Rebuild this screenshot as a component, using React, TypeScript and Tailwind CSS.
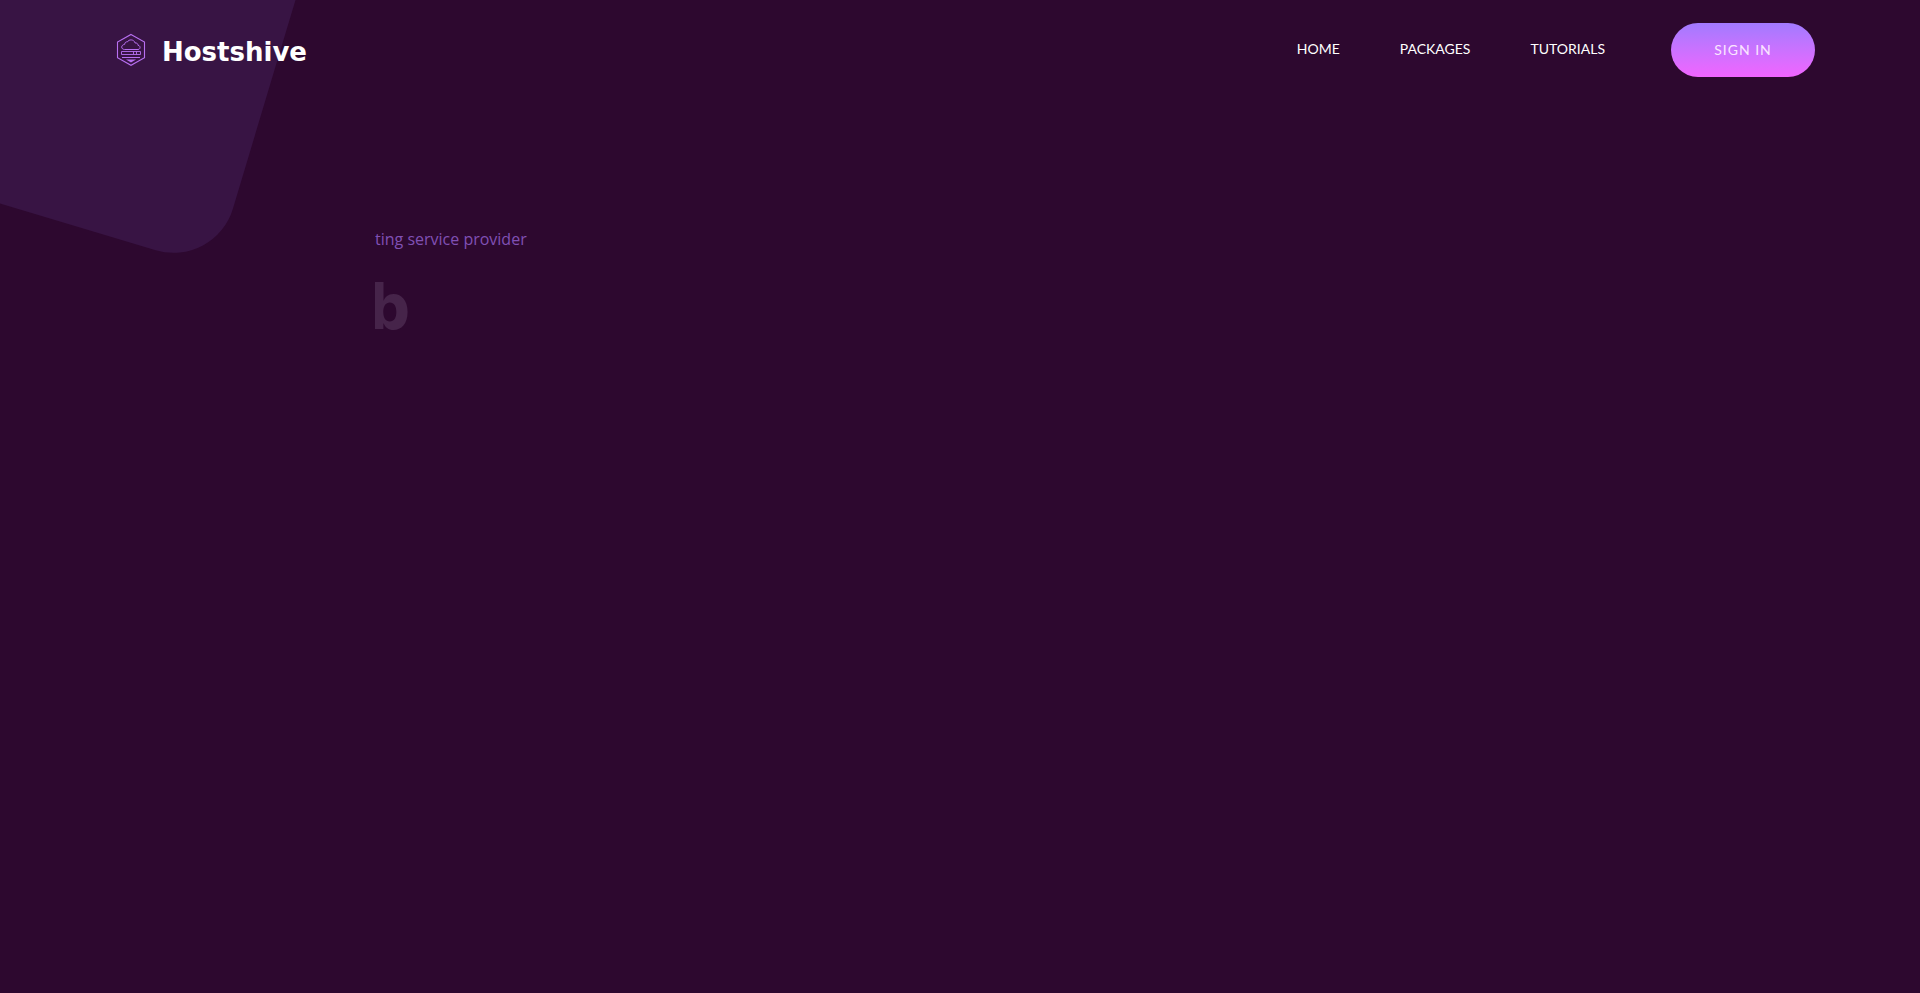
const links = ['HOME', 'PACKAGES', 'TUTORIALS'];

function HiveLogo() {
  return (
    <svg width="30" height="34" viewBox="0 0 30 34" fill="none" stroke="#b870f2" aria-hidden="true">
      <path d="M15 1.5 28.5 9v15.800L15 32.300 1.500 24.800V9Z" strokeWidth="1.1" />
      <path d="M8.500 16.500C4.700 16.300 4.800 11.900 8.700 11.300C8.700 9.300 10.200 8.700 11.500 8.800C12.700 6.200 18 6 19 9.900C21.200 9.900 22 10.900 21.900 12.200C25 12.800 24.500 16.500 22 16.500Z" strokeWidth="1" />
      <path d="M5.500 18.500H24.500V21.500H5.500ZM17.500 18.500V21.500M20.500 18.500V21.500" strokeWidth="0.9" />
      <path d="M6 24.500H24" strokeWidth="1" />
      <path d="M10 26.500H20L15 29.400Z" fill="#b870f2" stroke="none" />
    </svg>
  );
}

export default function App() {
  return (
    <div className="relative min-h-screen overflow-hidden bg-[#2d082f] font-['Open_Sans',sans-serif]">
      <div className="absolute -top-[181px] -left-[119px] size-[400px] rotate-[16.7deg] rounded-[62px] bg-[#381444]" />
      <header className="relative flex items-center justify-between pt-[23px] pr-[105px] pl-[116px]">
        <a href="#home" className="flex items-center gap-4 font-['DejaVu_Sans',sans-serif] text-[26px] leading-8 font-bold text-white">
          <HiveLogo />
          <span className="pt-1">Hostshive</span>
        </a>
        <div className="flex items-center gap-[66px]">
          <nav className="flex gap-[60px] pb-0.5 font-['Lato',sans-serif] text-sm text-white">
            {links.map((label) => (
              <a key={label} href={`#${label.toLowerCase()}`}>{label}</a>
            ))}
          </nav>
          <button className="h-[54px] w-36 rounded-full bg-linear-to-b from-[#a17aff] to-[#f164ff] font-['Lato',sans-serif] text-sm tracking-[1px] text-[#fbe6ff]">
            SIGN IN
          </button>
        </div>
      </header>
      <main className="relative ml-[375px] overflow-hidden pt-[150px]">
        <p className="text-base leading-6 text-[#8050b4]">ting service provider</p>
        <h1 className="-ml-1.5 pt-4 font-['Inter',sans-serif] text-[64px] leading-[78px] font-extrabold text-[#46244a]">b</h1>
      </main>
    </div>
  );
}
